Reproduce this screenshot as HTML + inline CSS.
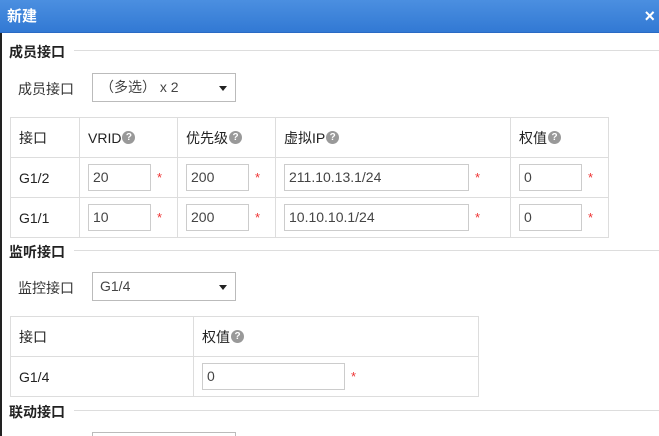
<!DOCTYPE html>
<html><head><meta charset="utf-8"><style>
*{margin:0;padding:0;box-sizing:border-box}
html,body{width:659px;height:436px;overflow:hidden}
body{background:#fff;position:relative;font-family:"Liberation Sans","Noto Sans CJK SC",sans-serif;font-size:14px;color:#333}
.a{position:absolute}
.title{left:0;top:0;width:659px;height:33px;background:linear-gradient(#4b8fe0,#3279d4);border-bottom:1px solid #2a6ac4;color:#fff;font-weight:bold;font-size:15px;line-height:33px;padding-left:7px}
.lb{left:0;top:33px;width:2px;height:403px;background:#222}
.sec{font-weight:bold;font-size:14px;color:#222;left:9px}
.line{height:1px;background:#ddd;left:74px;right:0}
.sel{border:1px solid #bbb;background:#fff;height:29px;width:144px;line-height:27px;padding-left:7px;color:#444}
.sel:after{content:"";position:absolute;right:8px;top:12px;border:4px solid transparent;border-top:5px solid #222}
table{position:absolute;border-collapse:collapse}
td{border:1px solid #ddd;padding:0 0 0 8px;height:40px;color:#222;white-space:nowrap;vertical-align:middle;line-height:16px}
.in{display:inline-block;border:1px solid #ccc;height:27px;line-height:25px;padding-left:4px;color:#444;vertical-align:middle;font-size:14px}
.st{color:#e33;font-size:13px;margin-left:6px;vertical-align:middle}
.q{display:inline-block;width:13px;height:13px;border-radius:50%;background:#999;color:#fff;font-size:10px;line-height:13px;text-align:center;font-weight:bold;vertical-align:middle;margin-left:1px;margin-top:-2px}
</style></head><body>
<div class="a title">新建</div>
<div class="a" style="right:4px;top:6px;color:#fff;font-size:18px;font-weight:bold">×</div>
<div class="a lb"></div>
<div class="a sec" style="top:42px">成员接口</div>
<div class="a line" style="top:50px"></div>
<div class="a" style="left:18px;top:79px">成员接口</div>
<div class="a sel" style="left:92px;top:73px">（多选） x 2</div>
<table style="left:10px;top:117px;width:599px">
<tr><td style="width:69px">接口</td><td style="width:98px">VRID<span class="q">?</span></td><td style="width:98px">优先级<span class="q">?</span></td><td style="width:235px">虚拟IP<span class="q">?</span></td><td>权值<span class="q">?</span></td></tr>
<tr><td>G1/2</td><td><span class="in" style="width:63px">20</span><span class="st">*</span></td><td><span class="in" style="width:63px">200</span><span class="st">*</span></td><td><span class="in" style="width:185px">211.10.13.1/24</span><span class="st">*</span></td><td><span class="in" style="width:63px">0</span><span class="st">*</span></td></tr>
<tr><td>G1/1</td><td><span class="in" style="width:63px">10</span><span class="st">*</span></td><td><span class="in" style="width:63px">200</span><span class="st">*</span></td><td><span class="in" style="width:185px">10.10.10.1/24</span><span class="st">*</span></td><td><span class="in" style="width:63px">0</span><span class="st">*</span></td></tr>
</table>
<div class="a sec" style="top:242px">监听接口</div>
<div class="a line" style="top:250px"></div>
<div class="a" style="left:18px;top:278px">监控接口</div>
<div class="a sel" style="left:92px;top:272px">G1/4</div>
<table style="left:10px;top:316px;width:469px">
<tr><td style="width:183px">接口</td><td>权值<span class="q">?</span></td></tr>
<tr><td>G1/4</td><td><span class="in" style="width:143px">0</span><span class="st">*</span></td></tr>
</table>
<div class="a sec" style="top:402px">联动接口</div>
<div class="a line" style="top:410px"></div>
<div class="a" style="left:92px;top:432px;width:144px;height:4px;border:1px solid #bbb;border-bottom:none"></div>
</body></html>
